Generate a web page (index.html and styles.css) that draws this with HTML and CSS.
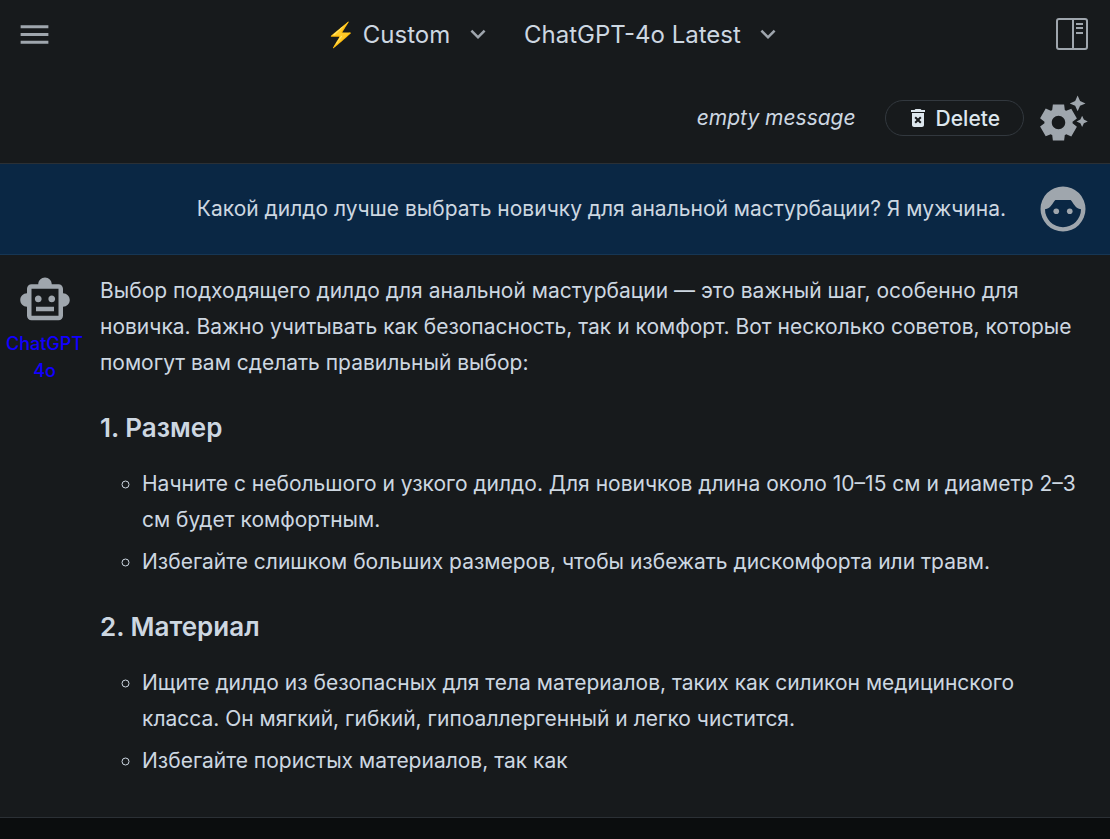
FILE: index.html
```html
<!DOCTYPE html>
<html lang="ru">
<head>
    <meta charset="UTF-8">
    <meta name="viewport" content="width=device-width, initial-scale=1.0">
    <title>Chat</title>
    <link rel="stylesheet" href="styles.css">
</head>
<body>
    <header class="topbar">
        <button class="icon-button" type="button" aria-label="Menu">
            <svg class="icon-menu" viewBox="0 0 24 24"><path d="M3 18h18v-2H3v2zm0-5h18v-2H3v2zm0-7v2h18V6H3z"/></svg>
        </button>
        <div class="selectors">
            <div class="dropdown">
                <select aria-label="Persona">
                    <option>⚡ Custom</option>
                </select>
                <svg class="chevron" viewBox="0 0 24 24"><path d="M16.59 8.59 12 13.17 7.41 8.59 6 10l6 6 6-6z"/></svg>
            </div>
            <div class="dropdown">
                <select aria-label="Model">
                    <option>ChatGPT-4o Latest</option>
                </select>
                <svg class="chevron" viewBox="0 0 24 24"><path d="M16.59 8.59 12 13.17 7.41 8.59 6 10l6 6 6-6z"/></svg>
            </div>
        </div>
        <button class="icon-button" type="button" aria-label="Side panel">
            <svg class="icon-panel" viewBox="0 0 32 32">
                <rect x="1" y="1" width="30" height="30" rx="2" fill="none" stroke="currentColor" stroke-width="2"/>
                <path d="M16 1h2v30h-2zM20 5h7v2h-7zM20 9h7v2h-7zM20 14h7v2h-7z"/>
            </svg>
        </button>
    </header>

    <main class="messages">
        <section class="message system">
            <p class="text empty">empty message</p>
            <button class="delete" type="button">
                <svg viewBox="0 0 24 24"><path d="M6 19c0 1.1.9 2 2 2h8c1.1 0 2-.9 2-2V7H6v12zm2.46-7.12 1.41-1.41L12 12.59l2.12-2.12 1.41 1.41L13.41 14l2.12 2.12-1.41 1.41L12 15.41l-2.12 2.12-1.41-1.41L10.59 14l-2.13-2.12zM15.5 4l-1-1h-5l-1 1H5v2h14V4z"/></svg>
                Delete
            </button>
            <div class="avatar">
                <svg viewBox="0 0 24 24"><path d="M17.41 6.59 15 5.5l2.41-1.09L18.5 2l1.09 2.41L22 5.5l-2.41 1.09L18.5 9l-1.09-2.41zm3.87 6.13L20.5 11l-.78 1.72-1.72.78 1.72.78.78 1.72.78-1.72L23 13.5l-1.72-.78zm-5.04 1.65 1.94 1.47-2.5 4.33-2.24-.94c-.2.13-.42.26-.64.37l-.3 2.4h-5l-.3-2.41c-.22-.11-.43-.23-.64-.37l-2.24.94-2.5-4.33 1.94-1.47c-.01-.11-.01-.24-.01-.36s0-.25.01-.37l-1.94-1.47 2.5-4.33 2.24.94c.2-.13.42-.26.64-.37L7.5 6h5l.3 2.41c.22.11.43.23.64.37l2.24-.94 2.5 4.33-1.94 1.47c.01.12.01.24.01.37s0 .24-.01.36zM13 14c0-1.66-1.34-3-3-3s-3 1.34-3 3 1.34 3 3 3 3-1.34 3-3z"/></svg>
            </div>
        </section>

        <section class="message user">
            <p class="text">Какой дилдо лучше выбрать новичку для анальной мастурбации? Я мужчина.</p>
            <div class="avatar">
                <svg viewBox="0 0 24 24">
                    <path fill-rule="evenodd" d="M12 2a10 10 0 1 0 0 20 10 10 0 0 0 0-20zM4 12.1C6.6 11.8 7.2 9.5 8.6 8h6.8C16.8 9.5 17.4 11.8 20 12.1A8 8 0 0 1 4 12.1z"/>
                    <circle cx="9" cy="13" r="1.25"/>
                    <circle cx="15" cy="13" r="1.25"/>
                </svg>
            </div>
        </section>

        <section class="message assistant">
            <div class="avatar">
                <svg viewBox="0 0 24 24"><path d="M20 9V7c0-1.1-.9-2-2-2h-3c0-1.66-1.34-3-3-3S9 3.34 9 5H6c-1.1 0-2 .9-2 2v2c-1.66 0-3 1.34-3 3s1.34 3 3 3v4c0 1.1.9 2 2 2h12c1.1 0 2-.9 2-2v-4c1.66 0 3-1.34 3-3s-1.34-3-3-3zm-2 10H6V7h12v12zm-9-6c-.83 0-1.5-.67-1.5-1.5S8.17 10 9 10s1.5.67 1.5 1.5S9.83 13 9 13zm7.5-1.5c0 .83-.67 1.5-1.5 1.5s-1.5-.67-1.5-1.5.67-1.5 1.5-1.5 1.5.67 1.5 1.5zM8 15h8v2H8v-2z"/></svg>
                <span class="model">ChatGPT 4o</span>
            </div>
            <div class="text">
                <p>Выбор подходящего дилдо для анальной мастурбации — это важный шаг, особенно для новичка. Важно учитывать как безопасность, так и комфорт. Вот несколько советов, которые помогут вам сделать правильный выбор:</p>
                <h3>1. Размер</h3>
                <ul>
                    <li>Начните с небольшого и узкого дилдо. Для новичков длина около 10–15 см и диаметр 2–3 см будет комфортным.</li>
                    <li>Избегайте слишком больших размеров, чтобы избежать дискомфорта или травм.</li>
                </ul>
                <h3>2. Материал</h3>
                <ul>
                    <li>Ищите дилдо из безопасных для тела материалов, таких как силикон медицинского класса. Он мягкий, гибкий, гипоаллергенный и легко чистится.</li>
                    <li>Избегайте пористых материалов, так как</li>
                </ul>
            </div>
        </section>
    </main>
</body>
</html>
```
FILE: styles.css
```css
* {
    box-sizing: border-box;
}

body {
    margin: 0;
    min-height: 100vh;
    background-color: #0b0d0e;
    color: #cdd7e1;
    font-family: Inter, "Noto Sans", sans-serif;
    font-size: 21px;
    line-height: 36px;
}

svg {
    display: block;
    fill: currentColor;
}

p {
    margin: 0;
}

/* Top bar */
.topbar {
    display: flex;
    align-items: center;
    justify-content: space-between;
    height: 73px;
    padding: 0 22px 5px 16px;
    background-color: #171a1c;
}

.icon-button {
    padding: 0;
    border: none;
    background: none;
    color: #9fa6ad;
    cursor: pointer;
}

.icon-menu {
    width: 37px;
    height: 37px;
}

.icon-panel {
    width: 32px;
    height: 32px;
}

.selectors {
    display: flex;
    gap: 31px;
}

.dropdown {
    position: relative;
}

.dropdown select {
    appearance: none;
    padding: 2px 42px 0 0;
    border: none;
    background: #171a1c;
    color: inherit;
    font-family: inherit;
    font-size: 24px;
    line-height: 36px;
    cursor: pointer;
}

.chevron {
    position: absolute;
    top: 4px;
    right: 0;
    width: 30px;
    height: 30px;
    color: #9fa6ad;
    pointer-events: none;
}

/* Messages */
.message {
    display: flex;
    align-items: flex-start;
    gap: 18px;
    padding: 18px 9px 18px 6px;
    border-bottom: 1px solid #2b3035;
    background-color: #171a1c;
}

.system,
.user {
    align-items: center;
    justify-content: flex-end;
}

.system {
    gap: 0;
}

.user {
    background-color: #0a2744;
    border-bottom-color: #163654;
}

.empty {
    margin-right: 29px;
    font-style: italic;
}

.delete {
    display: flex;
    align-items: center;
    gap: 6px;
    height: 36px;
    padding: 0 23px 0 20px;
    border: 1px solid #32383e;
    border-radius: 18px;
    background: none;
    color: #dde7ee;
    font-family: inherit;
    font-size: 21px;
    font-weight: 500;
    cursor: pointer;
}

.delete svg {
    width: 24px;
    height: 24px;
}

.avatar {
    display: flex;
    flex: none;
    flex-direction: column;
    align-items: center;
    width: 77px;
    color: #9fa6ad;
}

.avatar svg {
    width: 54px;
    height: 54px;
}

.model {
    margin-top: 3px;
    color: #1200ff;
    font-size: 18px;
    font-weight: 500;
    line-height: 27px;
    text-align: center;
}

.assistant {
    gap: 17px;
    padding-right: 27px;
    padding-bottom: 38px;
}

.text h3 {
    margin: 29px 0 20px;
    font-size: 26px;
    font-weight: 600;
    line-height: 36px;
}

.text ul {
    margin: 0;
    padding-left: 42px;
    list-style: circle;
}

.text li + li {
    margin-top: 6px;
}
```
